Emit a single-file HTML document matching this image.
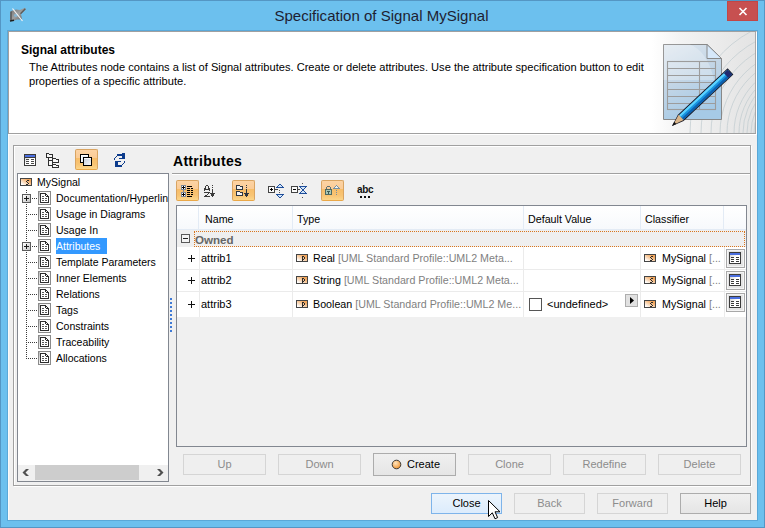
<!DOCTYPE html>
<html><head><meta charset="utf-8">
<style>
*{margin:0;padding:0;box-sizing:border-box}
html,body{width:765px;height:528px;overflow:hidden;background:#6cc0ee;font-family:"Liberation Sans",sans-serif;color:#000}
.a{position:absolute}
svg{position:absolute;overflow:visible}
#frame{left:0;top:0;width:765px;height:528px;background:#6cc0ee;border:1px solid #5496c4}
#title{left:-1px;top:7px;width:765px;text-align:center;font-size:15px;color:#1e1e32;line-height:18px;letter-spacing:0.02px}
#close{left:727px;top:1px;width:31px;height:20px;background:#c75050;border:1px solid #c24646}
#client{left:8px;top:31px;width:749px;height:489px;background:#f0f0f0}
#header{left:8px;top:31px;width:749px;height:104px;background:#fff;border-top:1px solid #a0a0a0;border-left:1px solid #a0a0a0;border-right:1px solid #fff}
#hbot{left:8px;top:133px;width:748px;height:1px;background:#a0a0a0}
#hright{left:755px;top:32px;width:1px;height:101px;background:#a8a8a8}
#hbot2{left:8px;top:134px;width:749px;height:1px;background:#fff}
#edge1{left:7px;top:30px;width:750px;height:1px;background:#5aa8d8}
#edge2{left:7px;top:30px;width:1px;height:490px;background:#5aa8d8}
#edge3{left:7px;top:520px;width:751px;height:1px;background:#5aa8d8}
#edge4{left:757px;top:30px;width:1px;height:491px;background:#5aa8d8}
#cwhite{left:8px;top:135px;width:1px;height:385px;background:#fbfbfb}
.btn{position:absolute;height:21px;border:1px solid #d5d5d5;background:#efefef;color:#8c8c8c;font-size:11px;text-align:center;line-height:19px}
.tree{position:absolute;font-size:10.5px;line-height:16px;white-space:nowrap;color:#000}
.cell{position:absolute;font-size:10.7px;line-height:14px;white-space:nowrap;color:#000}
.g{color:#7f7f7f}
.tb{position:absolute;width:23px;height:21px;border:1px solid #d9a462;border-bottom-color:#eaa848;border-radius:2px;background:linear-gradient(#fcd3a4 0%,#fbcc97 40%,#f7bd68 41%,#f8c474 75%,#fcd68a 100%)}
</style></head><body>
<div id="frame" class="a"></div>
<div id="title" class="a">Specification of Signal MySignal</div>
<div id="close" class="a"><svg width="31" height="20" style="left:-1px;top:-1px"><path d="M12.5 7 L19.5 14 M19.5 7 L12.5 14" stroke="#fff" stroke-width="1.6"/></svg></div>
<!-- app icon -->
<svg width="20" height="20" style="left:8px;top:5px">
<defs><linearGradient id="ai" x1="0" y1="0" x2="1" y2="1"><stop offset="0" stop-color="#707070"/><stop offset="0.5" stop-color="#a0a0a0"/><stop offset="1" stop-color="#4e4e4e"/></linearGradient></defs>
<g transform="translate(-8,-5)">
 <path d="M11 11 L16 9.5 L20 10 L25 7.8 L25.8 9.6 L21 14 L22 19.5 L17 19.5 L13 21 L10 21 Z" fill="url(#ai)"/>
 <path d="M11 11.5 V20" stroke="#5a5a5a" stroke-width="1.6"/>
 <path d="M20.5 13.8 L25.3 8.8" stroke="#5c5c5c" stroke-width="1.4"/>
 <ellipse cx="15.8" cy="15.3" rx="1.8" ry="1.6" fill="#86b4d0"/>
 <path d="M12.5 8.5 L22.5 21" stroke="#f4f4f4" stroke-width="1.2"/>
 <path d="M10 21 L14 20.2" stroke="#1e1e1e" stroke-width="1.6"/>
</g>
</svg>
<div id="client" class="a"></div>
<div id="header" class="a"></div><div id="hbot" class="a"></div><div id="hright" class="a" style="z-index:4"></div><div id="hbot2" class="a"></div><div id="edge1" class="a"></div><div id="edge2" class="a"></div><div id="cwhite" class="a"></div><div id="edge3" class="a"></div><div id="edge4" class="a"></div>
<div class="a" style="left:21px;top:43px;font-size:12px;font-weight:bold;line-height:14px">Signal attributes</div>
<div class="a" style="left:29px;top:60px;font-size:11.1px;line-height:14px;width:660px;color:#000;z-index:3">The Attributes node contains a list of Signal attributes. Create or delete attributes. Use the attribute specification button to edit<br>properties of a specific attribute.</div>

<!-- header illustration -->
<div class="a" style="left:640px;top:32px;width:116px;height:101px;background:linear-gradient(90deg,#fff 0%,#fff 10%,#f3f3f3 35%,#e3e3e3 100%)"></div>
<svg width="116" height="101" style="left:640px;top:32px;overflow:hidden">
 <g transform="translate(-640,-32)" fill="none" stroke="#c4ced2" stroke-width="0.8"><circle cx="805" cy="133" r="51"/><circle cx="805" cy="133" r="54"/><circle cx="805" cy="133" r="58"/><circle cx="805" cy="133" r="62"/><circle cx="805" cy="133" r="66"/><circle cx="805" cy="133" r="71"/><circle cx="805" cy="133" r="78"/><circle cx="805" cy="133" r="85"/><circle cx="805" cy="133" r="94"/><circle cx="805" cy="133" r="104"/><circle cx="805" cy="133" r="115"/></g>
</svg>
<svg width="80" height="90" style="left:660px;top:40px">
 <defs>
  <linearGradient id="dg" x1="0" y1="0" x2="0.4" y2="1"><stop offset="0" stop-color="#dfe7ef"/><stop offset="0.5" stop-color="#c4d6e6"/><stop offset="1" stop-color="#a6cae6"/></linearGradient>
  <linearGradient id="pg" x1="0" y1="0" x2="1" y2="1"><stop offset="0" stop-color="#6fd0ff"/><stop offset="1" stop-color="#0a7fd0"/></linearGradient>
 </defs>
 <path d="M3.5 4.5 H47 L61.5 18.5 V79.5 H3.5 Z" fill="url(#dg)" stroke="#888"/>
 <path d="M3.5 4.5 H30 C40 8 50 20 54 40 L3.5 40 Z" fill="#ffffff" opacity="0.25"/>
 <path d="M47 4.5 V18.5 H61.5 Z" fill="#d6e8fa" stroke="#888"/>
 <g stroke="#9c9c9c" stroke-width="1.1" fill="none">
  <rect x="7.5" y="21.5" width="48" height="48"/>
  <path d="M7.5 28.5 H55.5 M7.5 35.5 H55.5 M7.5 42.5 H55.5 M7.5 49.5 H55.5 M7.5 56.5 H55.5 M7.5 63.5 H55.5 M39.5 21.5 V69.5"/>
 </g>
 <g transform="translate(12,86) rotate(-43)">
  <path d="M0 0 L12 -4.2 H80 V4.2 H12 Z" fill="#1b1b28"/>
  <path d="M12.5 -3.2 H79 V3.2 H12.5 Z" fill="#1894e0"/>
  <path d="M12.5 -3.2 H79 V-1 H12.5 Z" fill="#5cd2ff"/>
  <path d="M12.5 1 H79 V3.2 H12.5 Z" fill="#0d5fae"/>
  <path d="M74 -3.2 H79 V3.2 H74 Z" fill="#202a6e"/>
  <path d="M1.5 0 L12.5 -3.6 V3.6 Z" fill="#d9b58a"/>
  <path d="M0 0 L4.5 -1.5 V1.5 Z" fill="#111"/>
 </g>
</svg>

<!-- group box -->
<div class="a" style="left:14px;top:146px;width:738px;height:341px;border:1px solid #fff"></div>
<div class="a" style="left:13px;top:145px;width:738px;height:341px;border:1px solid #a0a0a0"></div>

<!-- left toolbar -->
<div class="tb" style="left:75px;top:149px;width:23px;height:21px"></div>
<svg width="110" height="20" style="left:20px;top:150px" shape-rendering="crispEdges">
<defs>
 <linearGradient id="tg" x1="0" y1="0" x2="1" y2="1"><stop offset="0" stop-color="#c8c8c8"/><stop offset="0.5" stop-color="#fff"/></linearGradient>
 <linearGradient id="sq" x1="0" y1="0" x2="1" y2="1"><stop offset="0" stop-color="#c4ccd8"/><stop offset="1" stop-color="#f4f6fa"/></linearGradient>
</defs>
<g transform="translate(-20,-150)">
 <!-- table icon 24..35 x 154..165 -->
 <rect x="24" y="154" width="12" height="12" fill="#3a3a3a"/>
 <rect x="25" y="155" width="10" height="10" fill="url(#tg)"/>
 <rect x="25" y="155" width="10" height="2" fill="#4b6fe0"/>
 <rect x="25" y="157" width="10" height="1" fill="#3a3a3a"/>
 <g fill="#4a4a4a"><rect x="26" y="159" width="3" height="1"/><rect x="31" y="159" width="3" height="1"/><rect x="26" y="161" width="3" height="1"/><rect x="31" y="161" width="3" height="1"/><rect x="26" y="163" width="3" height="1"/><rect x="31" y="163" width="3" height="1"/></g>
 <!-- tree icon -->
 <g fill="#2e2e2e">
  <rect x="46" y="153" width="3" height="1"/><rect x="49" y="154" width="4" height="1"/><rect x="46" y="153" width="1" height="5"/><rect x="52" y="154" width="1" height="4"/><rect x="46" y="157" width="7" height="1"/>
  <rect x="48" y="158" width="1" height="8"/><rect x="52" y="158" width="1" height="8"/><rect x="48" y="160" width="5" height="1"/><rect x="48" y="165" width="5" height="1"/>
  <rect x="53" y="158" width="3" height="1"/><rect x="56" y="159" width="3" height="1"/><rect x="58" y="159" width="1" height="4"/><rect x="52" y="162" width="7" height="1"/>
  <rect x="53" y="164" width="3" height="1"/><rect x="56" y="165" width="3" height="1"/><rect x="58" y="165" width="1" height="3"/><rect x="52" y="167" width="7" height="1"/><rect x="52" y="164" width="1" height="4"/>
 </g>
 <g fill="#f6f6f6"><rect x="47" y="154" width="2" height="3"/><rect x="49" y="155" width="3" height="2"/><rect x="49" y="158" width="3" height="2"/><rect x="49" y="161" width="3" height="4"/>
 <rect x="53" y="159" width="3" height="3"/><rect x="56" y="160" width="2" height="2"/><rect x="53" y="165" width="3" height="2"/><rect x="56" y="166" width="2" height="1"/></g>
 <!-- two squares -->
 <rect x="80" y="154" width="9" height="9" fill="#000"/>
 <rect x="81" y="155" width="7" height="7" fill="#e8eef8"/>
 <rect x="81" y="155" width="7" height="1" fill="#fff"/><rect x="81" y="155" width="1" height="7" fill="#fff"/>
 <rect x="83" y="157" width="9" height="9" fill="#000"/>
 <rect x="84" y="158" width="7" height="7" fill="url(#sq)"/>
 <rect x="84" y="158" width="7" height="1" fill="#f8f8fc"/>
 <!-- refresh -->
 <g fill="#0c3b8c">
  <rect x="117" y="154" width="8" height="2"/><rect x="122" y="153" width="3" height="6"/><rect x="119" y="158" width="6" height="1"/>
  <rect x="116" y="156" width="1" height="1"/><rect x="115" y="157" width="1" height="1"/><rect x="114" y="158" width="1" height="2"/>
  <rect x="115" y="161" width="3" height="6"/><rect x="115" y="161" width="6" height="1"/><rect x="117" y="165" width="5" height="2"/>
  <rect x="122" y="164" width="1" height="1"/><rect x="123" y="163" width="1" height="1"/><rect x="124" y="162" width="1" height="1"/><rect x="124" y="161" width="1" height="1"/>
 </g>
</g>
</svg>

<!-- tree box -->
<div class="a" style="left:17px;top:173px;width:152px;height:309px;background:#fff;border:1px solid #828790"></div>
<div class="a" style="left:18px;top:465px;width:150px;height:16px;background:#f0f0f0"></div>
<div class="a" style="left:35px;top:465px;width:104px;height:15px;background:#cdcdcd"></div>
<svg width="150" height="16" style="left:18px;top:465px">
 <g transform="translate(-18,-465)" fill="#505050">
  <path d="M26 469 H29 L25.5 472.5 L29 476 H26 L22.5 472.5 Z"/>
  <path d="M160 469 H157 L160.5 472.5 L157 476 H160 L163.5 472.5 Z"/>
 </g>
</svg>

<!-- tree lines -->
<svg width="40" height="190" style="left:18px;top:174px" shape-rendering="crispEdges"><g transform="translate(-18,-174)"><defs><linearGradient id="pbg" x1="0" y1="0" x2="1" y2="1"><stop offset="0" stop-color="#fff"/><stop offset="1" stop-color="#c4c4c4"/></linearGradient>
<linearGradient id="og" x1="0" y1="1" x2="1" y2="0"><stop offset="0.1" stop-color="#fff"/><stop offset="0.8" stop-color="#f2a55a"/></linearGradient>
<linearGradient id="dfr" x1="0" y1="0" x2="1" y2="1"><stop offset="0" stop-color="#b8b8b8"/><stop offset="0.5" stop-color="#f4f4f4"/><stop offset="1" stop-color="#ffffff"/></linearGradient></defs><rect x="26" y="190" width="1" height="1" fill="#3a3a3a"/><rect x="26" y="192" width="1" height="1" fill="#3a3a3a"/><rect x="26" y="204" width="1" height="1" fill="#3a3a3a"/><rect x="26" y="206" width="1" height="1" fill="#3a3a3a"/><rect x="26" y="208" width="1" height="1" fill="#3a3a3a"/><rect x="26" y="210" width="1" height="1" fill="#3a3a3a"/><rect x="26" y="212" width="1" height="1" fill="#3a3a3a"/><rect x="26" y="214" width="1" height="1" fill="#3a3a3a"/><rect x="26" y="216" width="1" height="1" fill="#3a3a3a"/><rect x="26" y="218" width="1" height="1" fill="#3a3a3a"/><rect x="26" y="220" width="1" height="1" fill="#3a3a3a"/><rect x="26" y="222" width="1" height="1" fill="#3a3a3a"/><rect x="26" y="224" width="1" height="1" fill="#3a3a3a"/><rect x="26" y="226" width="1" height="1" fill="#3a3a3a"/><rect x="26" y="228" width="1" height="1" fill="#3a3a3a"/><rect x="26" y="230" width="1" height="1" fill="#3a3a3a"/><rect x="26" y="232" width="1" height="1" fill="#3a3a3a"/><rect x="26" y="234" width="1" height="1" fill="#3a3a3a"/><rect x="26" y="236" width="1" height="1" fill="#3a3a3a"/><rect x="26" y="238" width="1" height="1" fill="#3a3a3a"/><rect x="26" y="240" width="1" height="1" fill="#3a3a3a"/><rect x="26" y="252" width="1" height="1" fill="#3a3a3a"/><rect x="26" y="254" width="1" height="1" fill="#3a3a3a"/><rect x="26" y="256" width="1" height="1" fill="#3a3a3a"/><rect x="26" y="258" width="1" height="1" fill="#3a3a3a"/><rect x="26" y="260" width="1" height="1" fill="#3a3a3a"/><rect x="26" y="262" width="1" height="1" fill="#3a3a3a"/><rect x="26" y="264" width="1" height="1" fill="#3a3a3a"/><rect x="26" y="266" width="1" height="1" fill="#3a3a3a"/><rect x="26" y="268" width="1" height="1" fill="#3a3a3a"/><rect x="26" y="270" width="1" height="1" fill="#3a3a3a"/><rect x="26" y="272" width="1" height="1" fill="#3a3a3a"/><rect x="26" y="274" width="1" height="1" fill="#3a3a3a"/><rect x="26" y="276" width="1" height="1" fill="#3a3a3a"/><rect x="26" y="278" width="1" height="1" fill="#3a3a3a"/><rect x="26" y="280" width="1" height="1" fill="#3a3a3a"/><rect x="26" y="282" width="1" height="1" fill="#3a3a3a"/><rect x="26" y="284" width="1" height="1" fill="#3a3a3a"/><rect x="26" y="286" width="1" height="1" fill="#3a3a3a"/><rect x="26" y="288" width="1" height="1" fill="#3a3a3a"/><rect x="26" y="290" width="1" height="1" fill="#3a3a3a"/><rect x="26" y="292" width="1" height="1" fill="#3a3a3a"/><rect x="26" y="294" width="1" height="1" fill="#3a3a3a"/><rect x="26" y="296" width="1" height="1" fill="#3a3a3a"/><rect x="26" y="298" width="1" height="1" fill="#3a3a3a"/><rect x="26" y="300" width="1" height="1" fill="#3a3a3a"/><rect x="26" y="302" width="1" height="1" fill="#3a3a3a"/><rect x="26" y="304" width="1" height="1" fill="#3a3a3a"/><rect x="26" y="306" width="1" height="1" fill="#3a3a3a"/><rect x="26" y="308" width="1" height="1" fill="#3a3a3a"/><rect x="26" y="310" width="1" height="1" fill="#3a3a3a"/><rect x="26" y="312" width="1" height="1" fill="#3a3a3a"/><rect x="26" y="314" width="1" height="1" fill="#3a3a3a"/><rect x="26" y="316" width="1" height="1" fill="#3a3a3a"/><rect x="26" y="318" width="1" height="1" fill="#3a3a3a"/><rect x="26" y="320" width="1" height="1" fill="#3a3a3a"/><rect x="26" y="322" width="1" height="1" fill="#3a3a3a"/><rect x="26" y="324" width="1" height="1" fill="#3a3a3a"/><rect x="26" y="326" width="1" height="1" fill="#3a3a3a"/><rect x="26" y="328" width="1" height="1" fill="#3a3a3a"/><rect x="26" y="330" width="1" height="1" fill="#3a3a3a"/><rect x="26" y="332" width="1" height="1" fill="#3a3a3a"/><rect x="26" y="334" width="1" height="1" fill="#3a3a3a"/><rect x="26" y="336" width="1" height="1" fill="#3a3a3a"/><rect x="26" y="338" width="1" height="1" fill="#3a3a3a"/><rect x="26" y="340" width="1" height="1" fill="#3a3a3a"/><rect x="26" y="342" width="1" height="1" fill="#3a3a3a"/><rect x="26" y="344" width="1" height="1" fill="#3a3a3a"/><rect x="26" y="346" width="1" height="1" fill="#3a3a3a"/><rect x="26" y="348" width="1" height="1" fill="#3a3a3a"/><rect x="26" y="350" width="1" height="1" fill="#3a3a3a"/><rect x="26" y="352" width="1" height="1" fill="#3a3a3a"/><rect x="26" y="354" width="1" height="1" fill="#3a3a3a"/><rect x="26" y="356" width="1" height="1" fill="#3a3a3a"/><rect x="26" y="358" width="1" height="1" fill="#3a3a3a"/><rect x="32" y="198" width="1" height="1" fill="#3a3a3a"/><rect x="34" y="198" width="1" height="1" fill="#3a3a3a"/><rect x="36" y="198" width="1" height="1" fill="#3a3a3a"/><rect x="28" y="214" width="1" height="1" fill="#3a3a3a"/><rect x="30" y="214" width="1" height="1" fill="#3a3a3a"/><rect x="32" y="214" width="1" height="1" fill="#3a3a3a"/><rect x="34" y="214" width="1" height="1" fill="#3a3a3a"/><rect x="36" y="214" width="1" height="1" fill="#3a3a3a"/><rect x="28" y="230" width="1" height="1" fill="#3a3a3a"/><rect x="30" y="230" width="1" height="1" fill="#3a3a3a"/><rect x="32" y="230" width="1" height="1" fill="#3a3a3a"/><rect x="34" y="230" width="1" height="1" fill="#3a3a3a"/><rect x="36" y="230" width="1" height="1" fill="#3a3a3a"/><rect x="32" y="246" width="1" height="1" fill="#3a3a3a"/><rect x="34" y="246" width="1" height="1" fill="#3a3a3a"/><rect x="36" y="246" width="1" height="1" fill="#3a3a3a"/><rect x="28" y="262" width="1" height="1" fill="#3a3a3a"/><rect x="30" y="262" width="1" height="1" fill="#3a3a3a"/><rect x="32" y="262" width="1" height="1" fill="#3a3a3a"/><rect x="34" y="262" width="1" height="1" fill="#3a3a3a"/><rect x="36" y="262" width="1" height="1" fill="#3a3a3a"/><rect x="28" y="278" width="1" height="1" fill="#3a3a3a"/><rect x="30" y="278" width="1" height="1" fill="#3a3a3a"/><rect x="32" y="278" width="1" height="1" fill="#3a3a3a"/><rect x="34" y="278" width="1" height="1" fill="#3a3a3a"/><rect x="36" y="278" width="1" height="1" fill="#3a3a3a"/><rect x="28" y="294" width="1" height="1" fill="#3a3a3a"/><rect x="30" y="294" width="1" height="1" fill="#3a3a3a"/><rect x="32" y="294" width="1" height="1" fill="#3a3a3a"/><rect x="34" y="294" width="1" height="1" fill="#3a3a3a"/><rect x="36" y="294" width="1" height="1" fill="#3a3a3a"/><rect x="28" y="310" width="1" height="1" fill="#3a3a3a"/><rect x="30" y="310" width="1" height="1" fill="#3a3a3a"/><rect x="32" y="310" width="1" height="1" fill="#3a3a3a"/><rect x="34" y="310" width="1" height="1" fill="#3a3a3a"/><rect x="36" y="310" width="1" height="1" fill="#3a3a3a"/><rect x="28" y="326" width="1" height="1" fill="#3a3a3a"/><rect x="30" y="326" width="1" height="1" fill="#3a3a3a"/><rect x="32" y="326" width="1" height="1" fill="#3a3a3a"/><rect x="34" y="326" width="1" height="1" fill="#3a3a3a"/><rect x="36" y="326" width="1" height="1" fill="#3a3a3a"/><rect x="28" y="342" width="1" height="1" fill="#3a3a3a"/><rect x="30" y="342" width="1" height="1" fill="#3a3a3a"/><rect x="32" y="342" width="1" height="1" fill="#3a3a3a"/><rect x="34" y="342" width="1" height="1" fill="#3a3a3a"/><rect x="36" y="342" width="1" height="1" fill="#3a3a3a"/><rect x="28" y="358" width="1" height="1" fill="#3a3a3a"/><rect x="30" y="358" width="1" height="1" fill="#3a3a3a"/><rect x="32" y="358" width="1" height="1" fill="#3a3a3a"/><rect x="34" y="358" width="1" height="1" fill="#3a3a3a"/><rect x="36" y="358" width="1" height="1" fill="#3a3a3a"/><rect x="22" y="194" width="9" height="9" fill="#5c5c5c"/><rect x="23" y="195" width="7" height="7" fill="url(#pbg)"/><rect x="24" y="198" width="5" height="1" fill="#1a1a1a"/><rect x="26" y="196" width="1" height="5" fill="#1a1a1a"/><rect x="22" y="242" width="9" height="9" fill="#5c5c5c"/><rect x="23" y="243" width="7" height="7" fill="url(#pbg)"/><rect x="24" y="246" width="5" height="1" fill="#1a1a1a"/><rect x="26" y="244" width="1" height="5" fill="#1a1a1a"/><rect x="20" y="178" width="12" height="8" fill="#454545"/><rect x="21" y="179" width="10" height="6" fill="url(#og)"/><rect x="27" y="180" width="1" height="1" fill="#2a2a2a"/><rect x="28" y="180" width="1" height="1" fill="#2a2a2a"/><rect x="26" y="181" width="1" height="1" fill="#2a2a2a"/><rect x="27" y="182" width="1" height="1" fill="#2a2a2a"/><rect x="28" y="183" width="1" height="1" fill="#2a2a2a"/><rect x="26" y="184" width="1" height="1" fill="#2a2a2a"/><rect x="27" y="184" width="1" height="1" fill="#2a2a2a"/><rect x="38" y="191" width="13" height="14" fill="#8a8a8a"/><rect x="39" y="192" width="11" height="12" fill="url(#dfr)"/><rect x="40" y="192" width="10" height="12" fill="#fafafa"/><rect x="40" y="193" width="6" height="1" fill="#2e2e2e"/><rect x="40" y="193" width="1" height="10" fill="#2e2e2e"/><rect x="40" y="202" width="9" height="1" fill="#2e2e2e"/><rect x="48" y="196" width="1" height="7" fill="#2e2e2e"/><rect x="46" y="194" width="1" height="1" fill="#2e2e2e"/><rect x="47" y="195" width="1" height="1" fill="#2e2e2e"/><rect x="45" y="194" width="1" height="2" fill="#2e2e2e"/><rect x="46" y="196" width="2" height="1" fill="#2e2e2e"/><rect x="41" y="194" width="4" height="8" fill="#ffffff"/><rect x="45" y="197" width="3" height="5" fill="#ffffff"/><rect x="41" y="194" width="4" height="1" fill="#fff"/><rect x="42" y="196" width="2" height="1" fill="#5a5a5a"/><rect x="42" y="198" width="2" height="1" fill="#5a5a5a"/><rect x="45" y="198" width="2" height="1" fill="#5a5a5a"/><rect x="42" y="200" width="2" height="1" fill="#5a5a5a"/><rect x="45" y="200" width="2" height="1" fill="#5a5a5a"/><rect x="38" y="207" width="13" height="14" fill="#8a8a8a"/><rect x="39" y="208" width="11" height="12" fill="url(#dfr)"/><rect x="40" y="208" width="10" height="12" fill="#fafafa"/><rect x="40" y="209" width="6" height="1" fill="#2e2e2e"/><rect x="40" y="209" width="1" height="10" fill="#2e2e2e"/><rect x="40" y="218" width="9" height="1" fill="#2e2e2e"/><rect x="48" y="212" width="1" height="7" fill="#2e2e2e"/><rect x="46" y="210" width="1" height="1" fill="#2e2e2e"/><rect x="47" y="211" width="1" height="1" fill="#2e2e2e"/><rect x="45" y="210" width="1" height="2" fill="#2e2e2e"/><rect x="46" y="212" width="2" height="1" fill="#2e2e2e"/><rect x="41" y="210" width="4" height="8" fill="#ffffff"/><rect x="45" y="213" width="3" height="5" fill="#ffffff"/><rect x="41" y="210" width="4" height="1" fill="#fff"/><rect x="42" y="212" width="2" height="1" fill="#5a5a5a"/><rect x="42" y="214" width="2" height="1" fill="#5a5a5a"/><rect x="45" y="214" width="2" height="1" fill="#5a5a5a"/><rect x="42" y="216" width="2" height="1" fill="#5a5a5a"/><rect x="45" y="216" width="2" height="1" fill="#5a5a5a"/><rect x="38" y="223" width="13" height="14" fill="#8a8a8a"/><rect x="39" y="224" width="11" height="12" fill="url(#dfr)"/><rect x="40" y="224" width="10" height="12" fill="#fafafa"/><rect x="40" y="225" width="6" height="1" fill="#2e2e2e"/><rect x="40" y="225" width="1" height="10" fill="#2e2e2e"/><rect x="40" y="234" width="9" height="1" fill="#2e2e2e"/><rect x="48" y="228" width="1" height="7" fill="#2e2e2e"/><rect x="46" y="226" width="1" height="1" fill="#2e2e2e"/><rect x="47" y="227" width="1" height="1" fill="#2e2e2e"/><rect x="45" y="226" width="1" height="2" fill="#2e2e2e"/><rect x="46" y="228" width="2" height="1" fill="#2e2e2e"/><rect x="41" y="226" width="4" height="8" fill="#ffffff"/><rect x="45" y="229" width="3" height="5" fill="#ffffff"/><rect x="41" y="226" width="4" height="1" fill="#fff"/><rect x="42" y="228" width="2" height="1" fill="#5a5a5a"/><rect x="42" y="230" width="2" height="1" fill="#5a5a5a"/><rect x="45" y="230" width="2" height="1" fill="#5a5a5a"/><rect x="42" y="232" width="2" height="1" fill="#5a5a5a"/><rect x="45" y="232" width="2" height="1" fill="#5a5a5a"/><rect x="38" y="239" width="13" height="14" fill="#8a8a8a"/><rect x="39" y="240" width="11" height="12" fill="url(#dfr)"/><rect x="40" y="240" width="10" height="12" fill="#fafafa"/><rect x="40" y="241" width="6" height="1" fill="#2e2e2e"/><rect x="40" y="241" width="1" height="10" fill="#2e2e2e"/><rect x="40" y="250" width="9" height="1" fill="#2e2e2e"/><rect x="48" y="244" width="1" height="7" fill="#2e2e2e"/><rect x="46" y="242" width="1" height="1" fill="#2e2e2e"/><rect x="47" y="243" width="1" height="1" fill="#2e2e2e"/><rect x="45" y="242" width="1" height="2" fill="#2e2e2e"/><rect x="46" y="244" width="2" height="1" fill="#2e2e2e"/><rect x="41" y="242" width="4" height="8" fill="#ffffff"/><rect x="45" y="245" width="3" height="5" fill="#ffffff"/><rect x="41" y="242" width="4" height="1" fill="#fff"/><rect x="42" y="244" width="2" height="1" fill="#5a5a5a"/><rect x="42" y="246" width="2" height="1" fill="#5a5a5a"/><rect x="45" y="246" width="2" height="1" fill="#5a5a5a"/><rect x="42" y="248" width="2" height="1" fill="#5a5a5a"/><rect x="45" y="248" width="2" height="1" fill="#5a5a5a"/><rect x="38" y="255" width="13" height="14" fill="#8a8a8a"/><rect x="39" y="256" width="11" height="12" fill="url(#dfr)"/><rect x="40" y="256" width="10" height="12" fill="#fafafa"/><rect x="40" y="257" width="6" height="1" fill="#2e2e2e"/><rect x="40" y="257" width="1" height="10" fill="#2e2e2e"/><rect x="40" y="266" width="9" height="1" fill="#2e2e2e"/><rect x="48" y="260" width="1" height="7" fill="#2e2e2e"/><rect x="46" y="258" width="1" height="1" fill="#2e2e2e"/><rect x="47" y="259" width="1" height="1" fill="#2e2e2e"/><rect x="45" y="258" width="1" height="2" fill="#2e2e2e"/><rect x="46" y="260" width="2" height="1" fill="#2e2e2e"/><rect x="41" y="258" width="4" height="8" fill="#ffffff"/><rect x="45" y="261" width="3" height="5" fill="#ffffff"/><rect x="41" y="258" width="4" height="1" fill="#fff"/><rect x="42" y="260" width="2" height="1" fill="#5a5a5a"/><rect x="42" y="262" width="2" height="1" fill="#5a5a5a"/><rect x="45" y="262" width="2" height="1" fill="#5a5a5a"/><rect x="42" y="264" width="2" height="1" fill="#5a5a5a"/><rect x="45" y="264" width="2" height="1" fill="#5a5a5a"/><rect x="38" y="271" width="13" height="14" fill="#8a8a8a"/><rect x="39" y="272" width="11" height="12" fill="url(#dfr)"/><rect x="40" y="272" width="10" height="12" fill="#fafafa"/><rect x="40" y="273" width="6" height="1" fill="#2e2e2e"/><rect x="40" y="273" width="1" height="10" fill="#2e2e2e"/><rect x="40" y="282" width="9" height="1" fill="#2e2e2e"/><rect x="48" y="276" width="1" height="7" fill="#2e2e2e"/><rect x="46" y="274" width="1" height="1" fill="#2e2e2e"/><rect x="47" y="275" width="1" height="1" fill="#2e2e2e"/><rect x="45" y="274" width="1" height="2" fill="#2e2e2e"/><rect x="46" y="276" width="2" height="1" fill="#2e2e2e"/><rect x="41" y="274" width="4" height="8" fill="#ffffff"/><rect x="45" y="277" width="3" height="5" fill="#ffffff"/><rect x="41" y="274" width="4" height="1" fill="#fff"/><rect x="42" y="276" width="2" height="1" fill="#5a5a5a"/><rect x="42" y="278" width="2" height="1" fill="#5a5a5a"/><rect x="45" y="278" width="2" height="1" fill="#5a5a5a"/><rect x="42" y="280" width="2" height="1" fill="#5a5a5a"/><rect x="45" y="280" width="2" height="1" fill="#5a5a5a"/><rect x="38" y="287" width="13" height="14" fill="#8a8a8a"/><rect x="39" y="288" width="11" height="12" fill="url(#dfr)"/><rect x="40" y="288" width="10" height="12" fill="#fafafa"/><rect x="40" y="289" width="6" height="1" fill="#2e2e2e"/><rect x="40" y="289" width="1" height="10" fill="#2e2e2e"/><rect x="40" y="298" width="9" height="1" fill="#2e2e2e"/><rect x="48" y="292" width="1" height="7" fill="#2e2e2e"/><rect x="46" y="290" width="1" height="1" fill="#2e2e2e"/><rect x="47" y="291" width="1" height="1" fill="#2e2e2e"/><rect x="45" y="290" width="1" height="2" fill="#2e2e2e"/><rect x="46" y="292" width="2" height="1" fill="#2e2e2e"/><rect x="41" y="290" width="4" height="8" fill="#ffffff"/><rect x="45" y="293" width="3" height="5" fill="#ffffff"/><rect x="41" y="290" width="4" height="1" fill="#fff"/><rect x="42" y="292" width="2" height="1" fill="#5a5a5a"/><rect x="42" y="294" width="2" height="1" fill="#5a5a5a"/><rect x="45" y="294" width="2" height="1" fill="#5a5a5a"/><rect x="42" y="296" width="2" height="1" fill="#5a5a5a"/><rect x="45" y="296" width="2" height="1" fill="#5a5a5a"/><rect x="38" y="303" width="13" height="14" fill="#8a8a8a"/><rect x="39" y="304" width="11" height="12" fill="url(#dfr)"/><rect x="40" y="304" width="10" height="12" fill="#fafafa"/><rect x="40" y="305" width="6" height="1" fill="#2e2e2e"/><rect x="40" y="305" width="1" height="10" fill="#2e2e2e"/><rect x="40" y="314" width="9" height="1" fill="#2e2e2e"/><rect x="48" y="308" width="1" height="7" fill="#2e2e2e"/><rect x="46" y="306" width="1" height="1" fill="#2e2e2e"/><rect x="47" y="307" width="1" height="1" fill="#2e2e2e"/><rect x="45" y="306" width="1" height="2" fill="#2e2e2e"/><rect x="46" y="308" width="2" height="1" fill="#2e2e2e"/><rect x="41" y="306" width="4" height="8" fill="#ffffff"/><rect x="45" y="309" width="3" height="5" fill="#ffffff"/><rect x="41" y="306" width="4" height="1" fill="#fff"/><rect x="42" y="308" width="2" height="1" fill="#5a5a5a"/><rect x="42" y="310" width="2" height="1" fill="#5a5a5a"/><rect x="45" y="310" width="2" height="1" fill="#5a5a5a"/><rect x="42" y="312" width="2" height="1" fill="#5a5a5a"/><rect x="45" y="312" width="2" height="1" fill="#5a5a5a"/><rect x="38" y="319" width="13" height="14" fill="#8a8a8a"/><rect x="39" y="320" width="11" height="12" fill="url(#dfr)"/><rect x="40" y="320" width="10" height="12" fill="#fafafa"/><rect x="40" y="321" width="6" height="1" fill="#2e2e2e"/><rect x="40" y="321" width="1" height="10" fill="#2e2e2e"/><rect x="40" y="330" width="9" height="1" fill="#2e2e2e"/><rect x="48" y="324" width="1" height="7" fill="#2e2e2e"/><rect x="46" y="322" width="1" height="1" fill="#2e2e2e"/><rect x="47" y="323" width="1" height="1" fill="#2e2e2e"/><rect x="45" y="322" width="1" height="2" fill="#2e2e2e"/><rect x="46" y="324" width="2" height="1" fill="#2e2e2e"/><rect x="41" y="322" width="4" height="8" fill="#ffffff"/><rect x="45" y="325" width="3" height="5" fill="#ffffff"/><rect x="41" y="322" width="4" height="1" fill="#fff"/><rect x="42" y="324" width="2" height="1" fill="#5a5a5a"/><rect x="42" y="326" width="2" height="1" fill="#5a5a5a"/><rect x="45" y="326" width="2" height="1" fill="#5a5a5a"/><rect x="42" y="328" width="2" height="1" fill="#5a5a5a"/><rect x="45" y="328" width="2" height="1" fill="#5a5a5a"/><rect x="38" y="335" width="13" height="14" fill="#8a8a8a"/><rect x="39" y="336" width="11" height="12" fill="url(#dfr)"/><rect x="40" y="336" width="10" height="12" fill="#fafafa"/><rect x="40" y="337" width="6" height="1" fill="#2e2e2e"/><rect x="40" y="337" width="1" height="10" fill="#2e2e2e"/><rect x="40" y="346" width="9" height="1" fill="#2e2e2e"/><rect x="48" y="340" width="1" height="7" fill="#2e2e2e"/><rect x="46" y="338" width="1" height="1" fill="#2e2e2e"/><rect x="47" y="339" width="1" height="1" fill="#2e2e2e"/><rect x="45" y="338" width="1" height="2" fill="#2e2e2e"/><rect x="46" y="340" width="2" height="1" fill="#2e2e2e"/><rect x="41" y="338" width="4" height="8" fill="#ffffff"/><rect x="45" y="341" width="3" height="5" fill="#ffffff"/><rect x="41" y="338" width="4" height="1" fill="#fff"/><rect x="42" y="340" width="2" height="1" fill="#5a5a5a"/><rect x="42" y="342" width="2" height="1" fill="#5a5a5a"/><rect x="45" y="342" width="2" height="1" fill="#5a5a5a"/><rect x="42" y="344" width="2" height="1" fill="#5a5a5a"/><rect x="45" y="344" width="2" height="1" fill="#5a5a5a"/><rect x="38" y="351" width="13" height="14" fill="#8a8a8a"/><rect x="39" y="352" width="11" height="12" fill="url(#dfr)"/><rect x="40" y="352" width="10" height="12" fill="#fafafa"/><rect x="40" y="353" width="6" height="1" fill="#2e2e2e"/><rect x="40" y="353" width="1" height="10" fill="#2e2e2e"/><rect x="40" y="362" width="9" height="1" fill="#2e2e2e"/><rect x="48" y="356" width="1" height="7" fill="#2e2e2e"/><rect x="46" y="354" width="1" height="1" fill="#2e2e2e"/><rect x="47" y="355" width="1" height="1" fill="#2e2e2e"/><rect x="45" y="354" width="1" height="2" fill="#2e2e2e"/><rect x="46" y="356" width="2" height="1" fill="#2e2e2e"/><rect x="41" y="354" width="4" height="8" fill="#ffffff"/><rect x="45" y="357" width="3" height="5" fill="#ffffff"/><rect x="41" y="354" width="4" height="1" fill="#fff"/><rect x="42" y="356" width="2" height="1" fill="#5a5a5a"/><rect x="42" y="358" width="2" height="1" fill="#5a5a5a"/><rect x="45" y="358" width="2" height="1" fill="#5a5a5a"/><rect x="42" y="360" width="2" height="1" fill="#5a5a5a"/><rect x="45" y="360" width="2" height="1" fill="#5a5a5a"/></g></svg>
<div class="tree" style="left:37px;top:174px">MySignal</div>
<div class="a" style="left:18px;top:190px;width:150px;height:16px;overflow:hidden"><div class="tree" style="left:38px;top:0">Documentation/Hyperlinks</div></div>
<div class="tree" style="left:56px;top:206px">Usage in Diagrams</div>
<div class="tree" style="left:56px;top:222px">Usage In</div>
<div class="a" style="left:56px;top:238px;width:51px;height:16px;background:#3399ff"></div>
<div class="tree" style="left:56px;top:238px;color:#fff">Attributes</div>
<div class="tree" style="left:56px;top:254px">Template Parameters</div>
<div class="tree" style="left:56px;top:270px">Inner Elements</div>
<div class="tree" style="left:56px;top:286px">Relations</div>
<div class="tree" style="left:56px;top:302px">Tags</div>
<div class="tree" style="left:56px;top:318px">Constraints</div>
<div class="tree" style="left:56px;top:334px">Traceability</div>
<div class="tree" style="left:56px;top:350px">Allocations</div>

<!-- splitter -->
<svg width="2" height="36" style="left:170px;top:298px" shape-rendering="crispEdges"><rect x="0" y="0" width="2" height="2" fill="#3f7ad6"/><rect x="0" y="4" width="2" height="2" fill="#3f7ad6"/><rect x="0" y="8" width="2" height="2" fill="#3f7ad6"/><rect x="0" y="12" width="2" height="2" fill="#3f7ad6"/><rect x="0" y="16" width="2" height="2" fill="#3f7ad6"/><rect x="0" y="20" width="2" height="2" fill="#3f7ad6"/><rect x="0" y="24" width="2" height="2" fill="#3f7ad6"/><rect x="0" y="28" width="2" height="2" fill="#3f7ad6"/><rect x="0" y="32" width="2" height="2" fill="#3f7ad6"/></svg>

<!-- right panel -->
<div class="a" style="left:173px;top:153px;font-size:14px;font-weight:bold;line-height:16px;letter-spacing:0.3px">Attributes</div>
<div class="a" style="left:172px;top:173px;width:578px;height:1px;background:#a0a0a0"></div>
<div class="a" style="left:172px;top:174px;width:578px;height:1px;background:#fff"></div>

<!-- right toolbar -->
<div class="tb" style="left:176px;top:180px"></div>
<div class="tb" style="left:232px;top:180px"></div>
<div class="tb" style="left:321px;top:180px"></div>
<svg width="210" height="26" style="left:170px;top:178px" shape-rendering="crispEdges">
<g transform="translate(-170,-178)">
 <!-- icon1 -->
 <g fill="#7b8797"><rect x="181" y="185" width="5" height="1"/><rect x="181" y="189" width="5" height="1"/><rect x="181" y="185" width="1" height="5"/><rect x="185" y="185" width="1" height="5"/>
 <rect x="181" y="192" width="5" height="1"/><rect x="181" y="196" width="5" height="1"/><rect x="181" y="192" width="1" height="5"/><rect x="185" y="192" width="1" height="5"/>
 <rect x="183" y="190" width="1" height="2"/></g>
 <g fill="#fff"><rect x="182" y="186" width="3" height="3"/><rect x="182" y="193" width="3" height="3"/></g>
 <g fill="#000"><rect x="183" y="186" width="1" height="3"/><rect x="182" y="187" width="3" height="1"/><rect x="183" y="193" width="1" height="3"/><rect x="182" y="194" width="3" height="1"/>
 <rect x="187" y="186" width="5" height="1"/><rect x="187" y="196" width="5" height="1"/>
 <rect x="187" y="188" width="3" height="1"/><rect x="191" y="188" width="2" height="1"/>
 <rect x="187" y="190" width="3" height="1"/><rect x="191" y="190" width="2" height="1"/>
 <rect x="187" y="192" width="3" height="1"/><rect x="191" y="192" width="2" height="1"/>
 <rect x="187" y="194" width="3" height="1"/><rect x="191" y="194" width="2" height="1"/></g>
 <!-- AZ -->
 <g fill="#3a3a3a">
 <rect x="206" y="185" width="2" height="1"/><rect x="205" y="186" width="1" height="2"/><rect x="208" y="186" width="1" height="2"/>
 <rect x="204" y="188" width="2" height="1"/><rect x="208" y="188" width="2" height="1"/><rect x="204" y="189" width="1" height="2"/><rect x="209" y="189" width="1" height="2"/><rect x="205" y="189" width="4" height="1"/>
 <rect x="204" y="192" width="6" height="1"/><rect x="208" y="193" width="1" height="1"/><rect x="207" y="194" width="1" height="1"/><rect x="206" y="195" width="1" height="1"/><rect x="204" y="196" width="6" height="1"/><rect x="205" y="195" width="1" height="1"/>
 <rect x="212" y="185" width="1" height="1"/><rect x="212" y="187" width="1" height="1"/><rect x="212" y="189" width="1" height="8"/>
 <rect x="210" y="193" width="5" height="1"/><rect x="211" y="194" width="3" height="2"/>
 </g>
 <!-- folders -->
 <g fill="#2e3640">
 <rect x="236" y="185" width="4" height="1"/><rect x="240" y="186" width="3" height="1"/><rect x="236" y="185" width="1" height="5"/><rect x="242" y="186" width="1" height="4"/><rect x="236" y="189" width="7" height="1"/>
 <rect x="236" y="191" width="4" height="1"/><rect x="240" y="192" width="3" height="1"/><rect x="236" y="191" width="1" height="5"/><rect x="242" y="192" width="1" height="4"/><rect x="236" y="195" width="7" height="1"/>
 <rect x="246" y="185" width="1" height="1"/><rect x="246" y="187" width="1" height="1"/><rect x="246" y="189" width="1" height="8"/>
 <rect x="244" y="193" width="5" height="1"/><rect x="245" y="194" width="3" height="2"/>
 </g>
 <g fill="#f4f4f4"><rect x="237" y="186" width="3" height="3"/><rect x="240" y="187" width="2" height="2"/><rect x="237" y="192" width="3" height="3"/><rect x="240" y="193" width="2" height="2"/></g>
 <!-- expand -->
 <g fill="#444"><rect x="268" y="186" width="7" height="1"/><rect x="268" y="192" width="7" height="1"/><rect x="268" y="186" width="1" height="7"/><rect x="274" y="186" width="1" height="7"/><rect x="275" y="189" width="3" height="1"/></g>
 <rect x="269" y="187" width="5" height="5" fill="#fafafa"/>
 <g fill="#000"><rect x="271" y="188" width="1" height="3"/><rect x="270" y="189" width="3" height="1"/></g>
 <g fill="#555"><rect x="279" y="190" width="1" height="1"/><rect x="279" y="192" width="1" height="1"/></g>
 <g fill="#1f4e9a"><rect x="279" y="184" width="2" height="1"/><rect x="278" y="185" width="1" height="1"/><rect x="281" y="185" width="1" height="1"/><rect x="277" y="186" width="1" height="1"/><rect x="282" y="186" width="1" height="1"/><rect x="276" y="187" width="8" height="1"/>
 <rect x="276" y="194" width="8" height="1"/><rect x="277" y="195" width="1" height="1"/><rect x="282" y="195" width="1" height="1"/><rect x="278" y="196" width="1" height="1"/><rect x="281" y="196" width="1" height="1"/><rect x="279" y="197" width="2" height="1"/></g>
 <g fill="#d0e4f8"><rect x="279" y="185" width="2" height="1"/><rect x="278" y="186" width="4" height="1"/><rect x="278" y="195" width="4" height="1"/><rect x="279" y="196" width="2" height="1"/></g>
 <!-- collapse -->
 <g fill="#444"><rect x="291" y="186" width="7" height="1"/><rect x="291" y="192" width="7" height="1"/><rect x="291" y="186" width="1" height="7"/><rect x="297" y="186" width="1" height="7"/><rect x="298" y="189" width="2" height="1"/></g>
 <rect x="292" y="187" width="5" height="5" fill="#fafafa"/>
 <rect x="293" y="189" width="3" height="1" fill="#000"/>
 <g fill="#555"><rect x="302" y="183" width="1" height="1"/><rect x="302" y="197" width="1" height="1"/></g>
 <g fill="#1f4e9a"><rect x="299" y="186" width="8" height="1"/><rect x="300" y="187" width="1" height="1"/><rect x="305" y="187" width="1" height="1"/><rect x="301" y="188" width="1" height="1"/><rect x="304" y="188" width="1" height="1"/><rect x="302" y="189" width="2" height="2"/>
 <rect x="301" y="191" width="1" height="1"/><rect x="304" y="191" width="1" height="1"/><rect x="300" y="192" width="1" height="1"/><rect x="305" y="192" width="1" height="1"/><rect x="299" y="193" width="8" height="1"/></g>
 <g fill="#d0e4f8"><rect x="301" y="187" width="4" height="1"/><rect x="302" y="188" width="2" height="1"/><rect x="302" y="191" width="2" height="1"/><rect x="301" y="192" width="4" height="1"/></g>
 <!-- lock -->
 <g fill="#5f6f70"><rect x="327" y="186" width="3" height="1"/><rect x="326" y="187" width="1" height="2"/><rect x="330" y="187" width="1" height="2"/></g>
 <rect x="325" y="189" width="7" height="6" fill="#4e6a62"/>
 <rect x="326" y="190" width="5" height="4" fill="#a8c8b8"/>
 <g fill="#3e5a52"><rect x="327" y="191" width="3" height="1"/><rect x="328" y="192" width="1" height="2"/></g>
 <g fill="#7890a0"><rect x="336" y="185" width="1" height="1"/><rect x="335" y="186" width="1" height="1"/><rect x="337" y="186" width="1" height="1"/><rect x="334" y="187" width="1" height="1"/><rect x="338" y="187" width="1" height="1"/><rect x="333" y="188" width="7" height="1"/>
 <rect x="336" y="190" width="1" height="1"/><rect x="336" y="192" width="1" height="1"/><rect x="336" y="194" width="1" height="1"/></g>
 <g fill="#eef4f8"><rect x="336" y="186" width="1" height="1"/><rect x="335" y="187" width="3" height="1"/></g>
 <!-- abc dots -->
 <g fill="#111"><rect x="360" y="196" width="2" height="2"/><rect x="364" y="196" width="2" height="2"/><rect x="368" y="196" width="2" height="2"/></g>
</g>
</svg>
<div class="a" style="left:357px;top:184px;font-size:10px;font-weight:bold;line-height:12px;color:#111;letter-spacing:-0.3px">abc</div>

<!-- table -->
<div class="a" style="left:176px;top:205px;width:571px;height:242px;background:#f0f0f0;border:1px solid #828790"></div>
<div class="a" style="left:177px;top:206px;width:569px;height:23px;background:linear-gradient(#fff,#f7f9fc)"></div>
<div class="a" style="left:177px;top:229px;width:569px;height:1px;background:#e3ebf5"></div>
<div class="a" style="left:198px;top:206px;width:1px;height:23px;background:#e3ebf5"></div>
<div class="a" style="left:292px;top:206px;width:1px;height:23px;background:#e3ebf5"></div>
<div class="a" style="left:523px;top:206px;width:1px;height:23px;background:#e3ebf5"></div>
<div class="a" style="left:640px;top:206px;width:1px;height:23px;background:#e3ebf5"></div>
<div class="a" style="left:723px;top:206px;width:1px;height:23px;background:#e3ebf5"></div>
<div class="cell" style="left:205px;top:212px">Name</div>
<div class="cell" style="left:297px;top:212px">Type</div>
<div class="cell" style="left:528px;top:212px">Default Value</div>
<div class="cell" style="left:645px;top:212px">Classifier</div>

<!-- owned row -->
<div class="a" style="left:177px;top:230px;width:569px;height:17px;background:#efefef"></div>
<div class="a" style="left:194px;top:231px;width:551px;height:16px;border:1px dotted #d9761e"></div>
<svg width="10" height="10" style="left:181px;top:234px">
 <rect x="0.5" y="0.5" width="8" height="8" fill="#f4f4f4" stroke="#5a5a5a"/>
 <path d="M2 4.5 H7" stroke="#222"/>
</svg>
<div class="cell" style="left:195px;top:232px;font-weight:bold;color:#666;font-size:11.6px;line-height:15px">Owned</div>

<!-- rows -->
<div class="a" style="left:177px;top:247px;width:569px;height:70px;background:#fff"></div>
<div class="a" style="left:177px;top:269px;width:569px;height:1px;background:#ebebeb"></div>
<div class="a" style="left:177px;top:291px;width:569px;height:1px;background:#ebebeb"></div>
<div class="a" style="left:199px;top:247px;width:1px;height:70px;background:#ebebeb"></div>
<div class="a" style="left:292px;top:247px;width:1px;height:70px;background:#ebebeb"></div>
<div class="a" style="left:523px;top:247px;width:1px;height:70px;background:#ebebeb"></div>
<div class="a" style="left:640px;top:247px;width:1px;height:70px;background:#ebebeb"></div>
<div class="a" style="left:724px;top:247px;width:1px;height:70px;background:#ebebeb"></div>

<svg width="0" height="0" style="left:0;top:0">
 <defs>
  <linearGradient id="cg" x1="0" y1="0" x2="1" y2="0.3"><stop offset="0" stop-color="#fff"/><stop offset="1" stop-color="#f0a868"/></linearGradient>
  <symbol id="dt" viewBox="0 0 13 9">
   <rect x="0.5" y="0.5" width="11" height="7" fill="url(#cg)" stroke="#4a4a4a"/>
   <path d="M6.5 2 H8.5 C9.5 2 9.5 4.5 8.5 4.5 H7 M7 2 V7" stroke="#333" stroke-width="0.9" fill="none"/>
  </symbol>
  <symbol id="cl" viewBox="0 0 13 9">
   <rect x="0.5" y="0.5" width="11" height="7" fill="url(#cg)" stroke="#4a4a4a"/>
   <path d="M8 2.2 C6 1.8 6 3.8 7.5 4.2 C9 4.6 8.5 6.6 6.5 6" stroke="#333" stroke-width="0.9" fill="none"/>
  </symbol>
  <symbol id="spec" viewBox="0 0 19 19" shape-rendering="crispEdges">
   <rect x="0" y="0" width="19" height="19" fill="#a8a8a8"/>
   <rect x="1" y="1" width="17" height="17" fill="#f4f4f4"/>
   <rect x="2" y="2" width="15" height="15" fill="#e4e4e4"/>
   <rect x="3" y="3" width="12" height="12" fill="#3c3c3c"/>
   <rect x="4" y="4" width="10" height="10" fill="url(#tg)"/>
   <rect x="4" y="4" width="10" height="2" fill="#4b6fe0"/>
   <g fill="#3a3a3a"><rect x="5" y="8" width="3" height="1"/><rect x="10" y="8" width="3" height="1"/><rect x="5" y="10" width="3" height="1"/><rect x="10" y="10" width="3" height="1"/><rect x="5" y="12" width="3" height="1"/><rect x="10" y="12" width="3" height="1"/></g>
  </symbol>
 </defs>
</svg>

<svg width="7" height="7" style="left:188px;top:255px" shape-rendering="crispEdges"><rect x="0" y="3" width="7" height="1" fill="#111"/><rect x="3" y="0" width="1" height="7" fill="#111"/></svg>
<div class="cell" style="left:201px;top:251px;font-size:11px">attrib1</div>
<svg width="12" height="8" style="left:296px;top:254px" shape-rendering="crispEdges"><rect x="0" y="0" width="12" height="8" fill="#454545"/><rect x="1" y="1" width="10" height="6" fill="url(#og)"/><rect x="6" y="2" width="1" height="5" fill="#2a2a2a"/><rect x="7" y="2" width="1" height="1" fill="#2a2a2a"/><rect x="8" y="3" width="1" height="2" fill="#2a2a2a"/><rect x="7" y="5" width="1" height="1" fill="#2a2a2a"/></svg>
<div class="cell" style="left:313px;top:251px">Real <span class="g">[UML Standard Profile::UML2 Meta...</span></div>
<svg width="12" height="8" style="left:644px;top:254px" shape-rendering="crispEdges"><rect x="0" y="0" width="12" height="8" fill="#454545"/><rect x="1" y="1" width="10" height="6" fill="url(#og)"/><rect x="7" y="2" width="1" height="1" fill="#2a2a2a"/><rect x="8" y="2" width="1" height="1" fill="#2a2a2a"/><rect x="6" y="3" width="1" height="1" fill="#2a2a2a"/><rect x="7" y="4" width="1" height="1" fill="#2a2a2a"/><rect x="8" y="5" width="1" height="1" fill="#2a2a2a"/><rect x="6" y="6" width="1" height="1" fill="#2a2a2a"/><rect x="7" y="6" width="1" height="1" fill="#2a2a2a"/></svg>
<div class="cell" style="left:662px;top:251px">MySignal <span class="g">[...</span></div>
<svg width="19" height="19" style="left:726px;top:249px"><use href="#spec"/></svg>

<svg width="7" height="7" style="left:188px;top:277px" shape-rendering="crispEdges"><rect x="0" y="3" width="7" height="1" fill="#111"/><rect x="3" y="0" width="1" height="7" fill="#111"/></svg>
<div class="cell" style="left:201px;top:273px;font-size:11px">attrib2</div>
<svg width="12" height="8" style="left:296px;top:276px" shape-rendering="crispEdges"><rect x="0" y="0" width="12" height="8" fill="#454545"/><rect x="1" y="1" width="10" height="6" fill="url(#og)"/><rect x="6" y="2" width="1" height="5" fill="#2a2a2a"/><rect x="7" y="2" width="1" height="1" fill="#2a2a2a"/><rect x="8" y="3" width="1" height="2" fill="#2a2a2a"/><rect x="7" y="5" width="1" height="1" fill="#2a2a2a"/></svg>
<div class="cell" style="left:313px;top:273px">String <span class="g">[UML Standard Profile::UML2 Meta...</span></div>
<svg width="12" height="8" style="left:644px;top:276px" shape-rendering="crispEdges"><rect x="0" y="0" width="12" height="8" fill="#454545"/><rect x="1" y="1" width="10" height="6" fill="url(#og)"/><rect x="7" y="2" width="1" height="1" fill="#2a2a2a"/><rect x="8" y="2" width="1" height="1" fill="#2a2a2a"/><rect x="6" y="3" width="1" height="1" fill="#2a2a2a"/><rect x="7" y="4" width="1" height="1" fill="#2a2a2a"/><rect x="8" y="5" width="1" height="1" fill="#2a2a2a"/><rect x="6" y="6" width="1" height="1" fill="#2a2a2a"/><rect x="7" y="6" width="1" height="1" fill="#2a2a2a"/></svg>
<div class="cell" style="left:662px;top:273px">MySignal <span class="g">[...</span></div>
<svg width="19" height="19" style="left:726px;top:271px"><use href="#spec"/></svg>

<svg width="7" height="7" style="left:188px;top:301px" shape-rendering="crispEdges"><rect x="0" y="3" width="7" height="1" fill="#111"/><rect x="3" y="0" width="1" height="7" fill="#111"/></svg>
<div class="cell" style="left:201px;top:297px;font-size:11px">attrib3</div>
<svg width="12" height="8" style="left:296px;top:300px" shape-rendering="crispEdges"><rect x="0" y="0" width="12" height="8" fill="#454545"/><rect x="1" y="1" width="10" height="6" fill="url(#og)"/><rect x="6" y="2" width="1" height="5" fill="#2a2a2a"/><rect x="7" y="2" width="1" height="1" fill="#2a2a2a"/><rect x="8" y="3" width="1" height="2" fill="#2a2a2a"/><rect x="7" y="5" width="1" height="1" fill="#2a2a2a"/></svg>
<div class="cell" style="left:313px;top:297px">Boolean <span class="g">[UML Standard Profile::UML2 Me...</span></div>
<div class="a" style="left:529px;top:298px;width:13px;height:13px;border:1px solid #555;background:#fff"></div>
<div class="cell" style="left:547px;top:297px;font-size:11px">&lt;undefined&gt;</div>
<div class="a" style="left:625px;top:294px;width:13px;height:13px;border:1px solid #adadad;background:#e1e1e1"></div>
<svg width="13" height="13" style="left:625px;top:294px"><path d="M5 3 L9 6.5 L5 10 Z" fill="#000"/></svg>
<svg width="12" height="8" style="left:644px;top:300px" shape-rendering="crispEdges"><rect x="0" y="0" width="12" height="8" fill="#454545"/><rect x="1" y="1" width="10" height="6" fill="url(#og)"/><rect x="7" y="2" width="1" height="1" fill="#2a2a2a"/><rect x="8" y="2" width="1" height="1" fill="#2a2a2a"/><rect x="6" y="3" width="1" height="1" fill="#2a2a2a"/><rect x="7" y="4" width="1" height="1" fill="#2a2a2a"/><rect x="8" y="5" width="1" height="1" fill="#2a2a2a"/><rect x="6" y="6" width="1" height="1" fill="#2a2a2a"/><rect x="7" y="6" width="1" height="1" fill="#2a2a2a"/></svg>
<div class="cell" style="left:662px;top:297px">MySignal <span class="g">[...</span></div>
<svg width="19" height="19" style="left:726px;top:293px"><use href="#spec"/></svg>

<!-- buttons -->
<div class="btn" style="left:183px;top:454px;width:83px">Up</div>
<div class="btn" style="left:278px;top:454px;width:83px">Down</div>
<div class="btn" style="left:373px;top:453px;width:83px;height:23px;border-color:#acacac;color:#000;background:linear-gradient(#f0f0f0,#e5e5e5)"></div>
<div class="a" style="left:407px;top:457px;font-size:11px;line-height:14px">Create</div>
<svg width="11" height="11" style="left:391px;top:459px">
 <defs><radialGradient id="rc" cx="0.4" cy="0.35" r="0.7"><stop offset="0" stop-color="#ffe6c0"/><stop offset="1" stop-color="#f0902a"/></radialGradient></defs>
 <circle cx="5.5" cy="5.5" r="4.3" fill="url(#rc)" stroke="#3a3a3a" stroke-width="1"/>
</svg>
<div class="btn" style="left:468px;top:454px;width:83px">Clone</div>
<div class="btn" style="left:563px;top:454px;width:83px">Redefine</div>
<div class="btn" style="left:658px;top:454px;width:83px">Delete</div>

<div class="btn" style="left:431px;top:493px;width:71px;border-color:#7eb4ea;color:#000;background:linear-gradient(#ecf4fc,#dcecfc)">Close</div>
<div class="btn" style="left:514px;top:493px;width:71px">Back</div>
<div class="btn" style="left:597px;top:493px;width:71px">Forward</div>
<div class="btn" style="left:680px;top:493px;width:71px;border-color:#acacac;color:#000;background:linear-gradient(#f0f0f0,#e5e5e5)">Help</div>

<!-- cursor -->
<svg width="14" height="22" style="left:488px;top:500px">
 <path d="M0.5 0.5 V16.5 L4.3 12.8 L7 18.8 L9.6 17.6 L7 11.8 H12 Z" fill="#fff" stroke="#000" stroke-width="1" stroke-linejoin="miter"/>
</svg>
</body></html>
